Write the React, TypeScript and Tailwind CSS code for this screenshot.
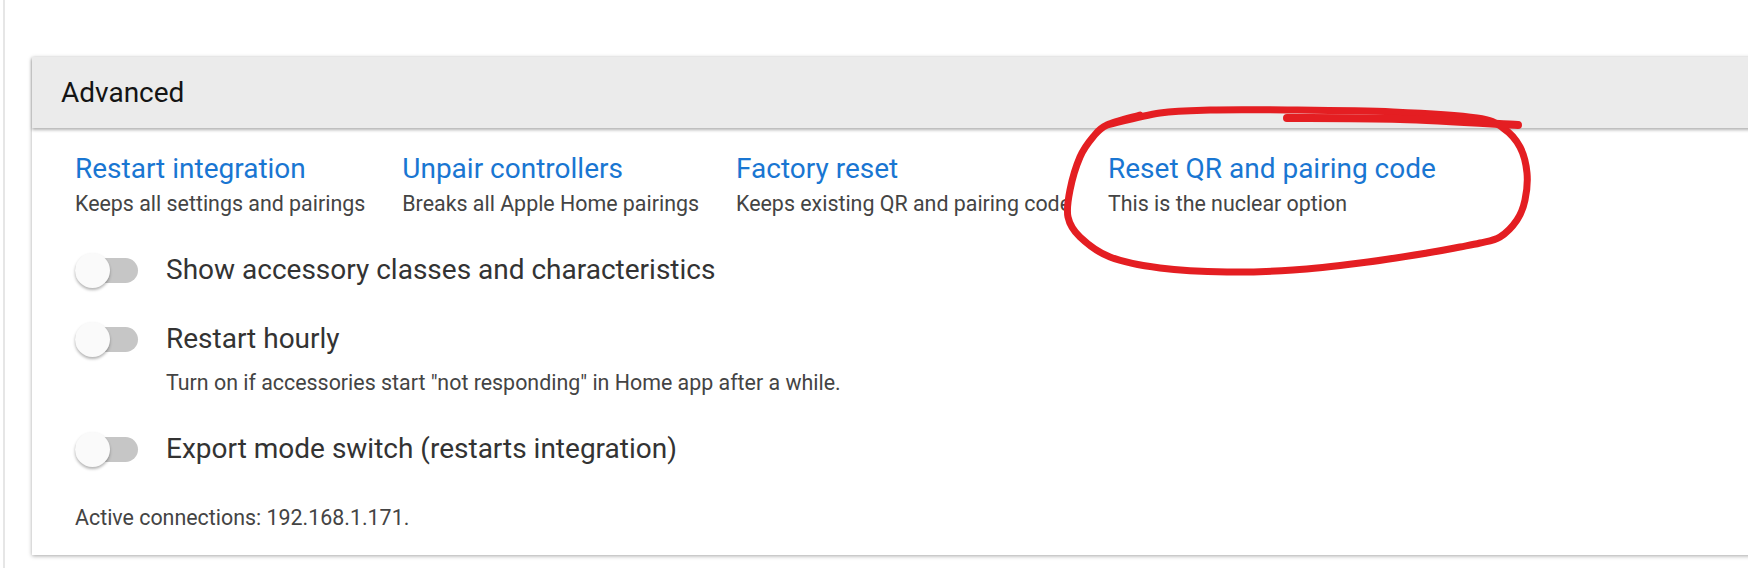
import React from 'react';

const actions = [
  { title: 'Restart integration', desc: 'Keeps all settings and pairings' },
  { title: 'Unpair controllers', desc: 'Breaks all Apple Home pairings' },
  { title: 'Factory reset', desc: 'Keeps existing QR and pairing code' },
  { title: 'Reset QR and pairing code', desc: 'This is the nuclear option' },
];

// hand-drawn red loop round the last action
const loop: [number, number][] = [
  [1107, 125], [1160, 113], [1210, 110], [1287, 110], [1393, 112], [1477, 118],
  [1503, 128], [1520, 147], [1527, 173], [1525, 200], [1517, 220], [1500, 237],
  [1480, 243], [1460, 247], [1427, 253], [1360, 263], [1293, 270], [1227, 272],
  [1160, 268], [1110, 257], [1080, 237], [1068, 217], [1070, 190], [1080, 157],
  [1093, 137], [1107, 125], [1140, 115],
];
const topStroke: [number, number][] = [[1287, 118], [1400, 119], [1518, 125]];

const smooth = (pts: [number, number][]) => {
  let d = `M${pts[0][0]},${pts[0][1]}`;
  for (let i = 0; i < pts.length - 1; i++) {
    const p0 = pts[i - 1] || pts[i];
    const p1 = pts[i];
    const p2 = pts[i + 1];
    const p3 = pts[i + 2] || p2;
    const c1 = [p1[0] + (p2[0] - p0[0]) / 6, p1[1] + (p2[1] - p0[1]) / 6];
    const c2 = [p2[0] - (p3[0] - p1[0]) / 6, p2[1] - (p3[1] - p1[1]) / 6];
    d += ` C${c1[0]},${c1[1]} ${c2[0]},${c2[1]} ${p2[0]},${p2[1]}`;
  }
  return d;
};

const Toggle = () => (
  <div className="relative w-[63px] h-[35px] flex items-center shrink-0">
    <div className="w-full h-[25px] rounded-full bg-[#c6c6c6]" />
    <div className="absolute left-0 top-0 w-[35px] h-[35px] rounded-full bg-[#fafafa] shadow-[0_2px_3px_rgba(0,0,0,0.3)]" />
  </div>
);

const App = () => {
  return (
    <div className="relative w-[1748px] h-[568px] overflow-hidden bg-white pl-[3px] font-[Roboto,sans-serif]">
      <div className="h-full border-l-2 border-[#e6e6e6] pt-[57px] pl-[27px]">
        <div className="w-[1760px] bg-white shadow-[0_1px_4px_rgba(0,0,0,0.35)]">
          <div className="relative z-10 h-[71px] flex items-center pl-[29px] bg-[#ebebeb] text-[28px] text-[#141414] shadow-[0_2px_3px_rgba(0,0,0,0.3)]">
            Advanced
          </div>

          <div className="pl-[43px] pt-[23px] pb-[23px]">
            <div className="flex gap-[37px]">
              {actions.map((a) => (
                <div key={a.title} className="flex flex-col">
                  <a href="#" className="text-[28px] leading-[36px] text-[#1976d2]">
                    {a.title}
                  </a>
                  <span className="mt-[3px] text-[21.4px] leading-[28px] text-[#444]">{a.desc}</span>
                </div>
              ))}
            </div>

            <div className="mt-[28px] h-[48px] flex items-center gap-[28px]">
              <Toggle />
              <span className="text-[28px] text-[#333]">Show accessory classes and characteristics</span>
            </div>

            <div className="mt-[21px] h-[48px] flex items-center gap-[28px]">
              <Toggle />
              <span className="text-[28px] text-[#333]">Restart hourly</span>
            </div>
            <div className="mt-[6px] pl-[91px] text-[21.4px] leading-[28px] text-[#444]">
              Turn on if accessories start "not responding" in Home app after a while.
            </div>

            <div className="mt-[28px] h-[48px] flex items-center gap-[28px]">
              <Toggle />
              <span className="text-[28px] text-[#333]">Export mode switch (restarts integration)</span>
            </div>

            <div className="mt-[31px] text-[21.4px] leading-[28px] text-[#444]">
              Active connections: 192.168.1.171.
            </div>
          </div>
        </div>
      </div>

      <svg className="absolute inset-0 z-20 pointer-events-none" width="1748" height="568">
        <path d={smooth(loop)} fill="none" stroke="#e41e22" strokeWidth="7" strokeLinecap="round" strokeLinejoin="round" />
        <path d={smooth(topStroke)} fill="none" stroke="#e41e22" strokeWidth="8" strokeLinecap="round" />
      </svg>
    </div>
  );
};

export default App;
